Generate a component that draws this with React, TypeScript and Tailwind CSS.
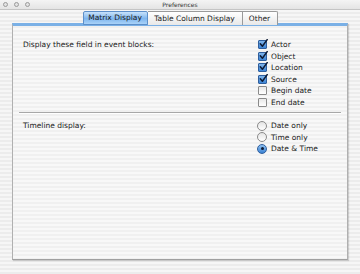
import React from "react";

const stripes =
  "bg-[repeating-linear-gradient(180deg,#ececec_0px,#ececec_2px,#f6f6f6_2px,#f6f6f6_4px)]";

const fields = [
  { label: "Actor", checked: true },
  { label: "Object", checked: true },
  { label: "Location", checked: true },
  { label: "Source", checked: true },
  { label: "Begin date", checked: false },
  { label: "End date", checked: false },
];

const timeline = [
  { label: "Date only", on: false },
  { label: "Time only", on: false },
  { label: "Date & Time", on: true },
];

function Check({ checked }: { checked: boolean }) {
  if (!checked) {
    return (
      <span className="w-[9px] h-[9px] border border-[#8a8a8a] bg-[linear-gradient(180deg,#e8e8e8,#ffffff)] rounded-[1px] shrink-0" />
    );
  }
  return (
    <span className="relative w-[9px] h-[9px] border border-[#2f5f9e] bg-[linear-gradient(180deg,#7fb4ea,#3c84d6)] rounded-[1px] shrink-0">
      <svg className="absolute -top-[2px] left-0" width="9" height="9" viewBox="0 0 9 9">
        <path d="M1.3 4.8 L3.4 7.3 L8.2 0.6" fill="none" stroke="#0d1a33" strokeWidth="1.5" strokeLinecap="round" strokeLinejoin="round" />
      </svg>
    </span>
  );
}

function Radio({ on }: { on: boolean }) {
  if (!on) {
    return (
      <span className="w-[10px] h-[10px] rounded-full border border-[#8a8a8a] bg-[linear-gradient(180deg,#e4e4e4,#ffffff)] shrink-0" />
    );
  }
  return (
    <span className="w-[10px] h-[10px] rounded-full border border-[#2f5f9e] bg-[linear-gradient(180deg,#8fc0f0,#3a82d4)] shrink-0 flex items-center justify-center">
      <span className="w-[3px] h-[3px] rounded-full bg-[#0d1a33]" />
    </span>
  );
}

export default function App() {
  return (
    <div
      className={`w-[360px] h-[274px] overflow-hidden flex flex-col text-[#1a1a1a] ${stripes}`}
      style={{ fontFamily: '"DejaVu Sans", "Liberation Sans", sans-serif' }}
    >
      {/* title bar */}
      <div className="relative h-[10px] flex items-center border-b border-[#c4c4c4] bg-[linear-gradient(180deg,#f4f4f4,#e4e4e4)]">
        <div className="flex gap-[6px] pl-[3px]">
          <span className="w-[5px] h-[5px] rounded-full border border-[#9a9a9a] bg-[#e2e2e2]" />
          <span className="w-[5px] h-[5px] rounded-full border border-[#9a9a9a] bg-[#e2e2e2]" />
          <span className="w-[5px] h-[5px] rounded-full border border-[#9a9a9a] bg-[#e2e2e2]" />
        </div>
        <span className="absolute inset-x-0 text-center text-[6px] leading-[10px] text-[#333]">Preferences</span>
      </div>

      {/* tabs */}
      <div className="flex justify-center mt-[1px] h-[14px] relative z-10">
        <div className="w-[65px] h-[14px] flex items-center justify-center text-[7.5px] rounded-t-[2px] border border-[#5d8fc9] bg-[linear-gradient(180deg,#c8e2fb,#7fb6ee_55%,#a9d2f8)]">
          Matrix Display
        </div>
        <div className="w-[95px] h-[14px] flex items-center justify-center text-[7.5px] border-t border-r border-[#9a9a9a] bg-[linear-gradient(180deg,#ffffff,#e8e8e8)]">
          Table Column Display
        </div>
        <div className="w-[35px] h-[14px] flex items-center justify-center text-[7.5px] rounded-tr-[2px] border-t border-r border-[#9a9a9a] bg-[linear-gradient(180deg,#ffffff,#e8e8e8)]">
          Other
        </div>
      </div>

      {/* panel */}
      <div className="mx-[12px] -mt-[2px] h-[237px] border-t-[3px] border-t-[#7ab0e6] border-x border-b border-x-[#b0b0b0] border-b-[#a0a0a0] shadow-[1px_1px_1px_rgba(0,0,0,0.15)] bg-[repeating-linear-gradient(180deg,#f0f0f0_0px,#f0f0f0_2px,#f8f8f8_2px,#f8f8f8_4px)]">
        <div className="flex pt-[13px] pl-[10px]">
          <div className="w-[235px] text-[7.5px] leading-[11.5px]">Display these field in event blocks:</div>
          <div className="flex flex-col">
            {fields.map((f) => (
              <div key={f.label} className="flex items-center gap-[4px] h-[11.5px] text-[7.5px]">
                <Check checked={f.checked} />
                <span>{f.label}</span>
              </div>
            ))}
          </div>
        </div>

        <div className="mx-[6px] mt-[4px] border-t border-[#a8a8a8] border-b border-b-white" />

        <div className="flex pt-[6px] pl-[10px]">
          <div className="w-[234px] text-[7.5px] leading-[11.5px]">Timeline display:</div>
          <div className="flex flex-col">
            {timeline.map((t) => (
              <div key={t.label} className="flex items-center gap-[4px] h-[11.5px] text-[7.5px]">
                <Radio on={t.on} />
                <span>{t.label}</span>
              </div>
            ))}
          </div>
        </div>
      </div>
    </div>
  );
}
